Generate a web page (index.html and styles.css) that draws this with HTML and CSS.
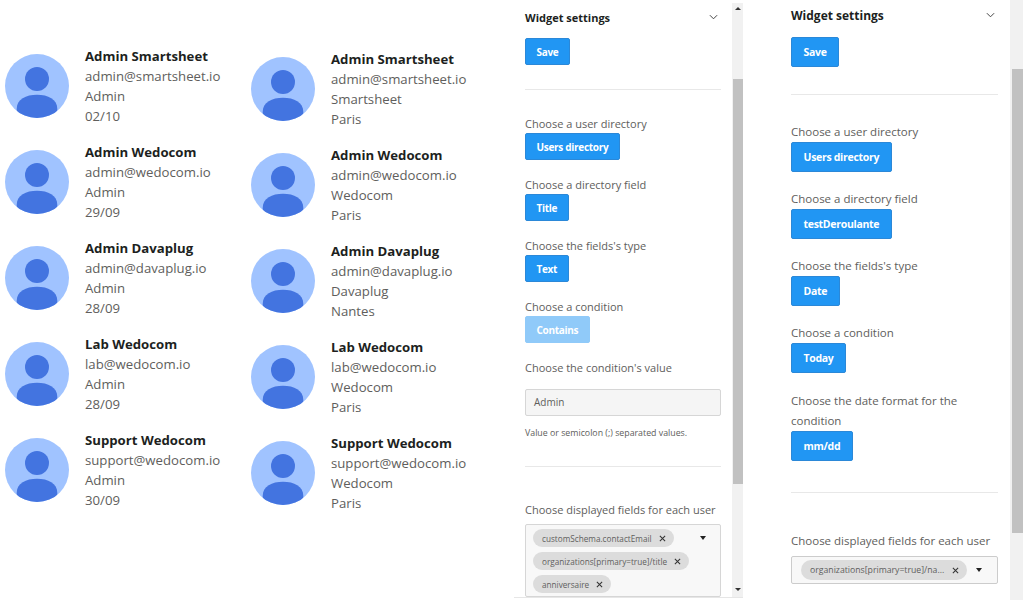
FILE: index.html
```html
<!DOCTYPE html>
<html lang="en">
<head>
<meta charset="utf-8">
<title>Widgets</title>
<link rel="stylesheet" href="styles.css">
</head>
<body>
<svg class="defs" width="0" height="0"><defs>
<symbol id="avatar" viewBox="0 0 64 64">
<clipPath id="disc"><circle cx="32" cy="32" r="32"/></clipPath>
<circle cx="32" cy="32" r="32" fill="#a0c3ff"/>
<g clip-path="url(#disc)" fill="#4374e0"><circle cx="32" cy="25" r="12"/><path d="M11.7 64V55C11.7 45 21 40.7 32 40.7S52.3 45 52.3 55V64Z"/></g>
</symbol>
<symbol id="x" viewBox="0 0 8 8"><path d="M1 1l6 6M7 1L1 7" stroke="#333" stroke-width="1.2" fill="none"/></symbol>
</defs></svg>
<main class="page">
<section class="list list-a">
<article class="user"><svg class="avatar"><use href="#avatar"/></svg><div><h3>Admin Smartsheet</h3><p>admin@smartsheet.io</p><p>Admin</p><p>02/10</p></div></article>
<article class="user"><svg class="avatar"><use href="#avatar"/></svg><div><h3>Admin Wedocom</h3><p>admin@wedocom.io</p><p>Admin</p><p>29/09</p></div></article>
<article class="user"><svg class="avatar"><use href="#avatar"/></svg><div><h3>Admin Davaplug</h3><p>admin@davaplug.io</p><p>Admin</p><p>28/09</p></div></article>
<article class="user"><svg class="avatar"><use href="#avatar"/></svg><div><h3>Lab Wedocom</h3><p>lab@wedocom.io</p><p>Admin</p><p>28/09</p></div></article>
<article class="user"><svg class="avatar"><use href="#avatar"/></svg><div><h3>Support Wedocom</h3><p>support@wedocom.io</p><p>Admin</p><p>30/09</p></div></article>
</section>
<section class="list list-b">
<article class="user"><svg class="avatar"><use href="#avatar"/></svg><div><h3>Admin Smartsheet</h3><p>admin@smartsheet.io</p><p>Smartsheet</p><p>Paris</p></div></article>
<article class="user"><svg class="avatar"><use href="#avatar"/></svg><div><h3>Admin Wedocom</h3><p>admin@wedocom.io</p><p>Wedocom</p><p>Paris</p></div></article>
<article class="user"><svg class="avatar"><use href="#avatar"/></svg><div><h3>Admin Davaplug</h3><p>admin@davaplug.io</p><p>Davaplug</p><p>Nantes</p></div></article>
<article class="user"><svg class="avatar"><use href="#avatar"/></svg><div><h3>Lab Wedocom</h3><p>lab@wedocom.io</p><p>Wedocom</p><p>Paris</p></div></article>
<article class="user"><svg class="avatar"><use href="#avatar"/></svg><div><h3>Support Wedocom</h3><p>support@wedocom.io</p><p>Wedocom</p><p>Paris</p></div></article>
</section>

<aside class="panel panel-a">
<div class="panel-body">
<header class="head"><h2>Widget settings</h2><svg class="chev" viewBox="0 0 10 6"><path d="M1 1l4 4 4-4" fill="none" stroke="#444" stroke-width="1.1"/></svg></header>
<button class="btn btn-save">Save</button>
<hr class="rule rule-1">
<div class="field"><label>Choose a user directory</label><button class="btn">Users directory</button></div>
<div class="field"><label>Choose a directory field</label><button class="btn">Title</button></div>
<div class="field"><label>Choose the fields's type</label><button class="btn">Text</button></div>
<div class="field"><label>Choose a condition</label><button class="btn btn-off">Contains</button></div>
<div class="field field-input"><label>Choose the condition's value</label><div class="input">Admin</div><small>Value or semicolon (;) separated values.</small></div>
<hr class="rule rule-2">
<div class="field field-multi"><label>Choose displayed fields for each user</label>
<div class="multi"><div class="chips"><span class="chip">customSchema.contactEmail<svg class="x"><use href="#x"/></svg></span><span class="chip">organizations[primary=true]/title<svg class="x"><use href="#x"/></svg></span><span class="chip">anniversaire<svg class="x"><use href="#x"/></svg></span></div><i class="caret"></i></div></div>
</div>
<div class="scrollbar"><span class="arrow up"></span><span class="thumb"></span><span class="arrow down"></span></div>
</aside>

<aside class="panel panel-b">
<div class="panel-body">
<header class="head"><h2>Widget settings</h2><svg class="chev" viewBox="0 0 10 6"><path d="M1 1l4 4 4-4" fill="none" stroke="#444" stroke-width="1.1"/></svg></header>
<button class="btn btn-save">Save</button>
<hr class="rule rule-1">
<div class="field"><label>Choose a user directory</label><button class="btn">Users directory</button></div>
<div class="field"><label>Choose a directory field</label><button class="btn">testDeroulante</button></div>
<div class="field"><label>Choose the fields's type</label><button class="btn">Date</button></div>
<div class="field"><label>Choose a condition</label><button class="btn">Today</button></div>
<div class="field field-last"><label>Choose the date format for the condition</label><button class="btn">mm/dd</button></div>
<hr class="rule rule-2">
<div class="field field-multi"><label>Choose displayed fields for each user</label>
<div class="multi"><div class="chips"><span class="chip">organizations[primary=true]/na...<svg class="x"><use href="#x"/></svg></span></div><i class="caret"></i></div></div>
</div>
<div class="scrollbar"><span class="thumb"></span></div>
</aside>
</main>
</body>
</html>
```
FILE: styles.css
```css
* { box-sizing: border-box; }
html, body { margin: 0; height: 100%; background: #fff; overflow: hidden; }
body { font-family: "Open Sans", "Noto Sans", sans-serif; color: #605e5c; }
.defs { position: absolute; }
.page { display: flex; align-items: flex-start; height: 611px; }

.list { flex: none; width: 246px; padding-left: 5px; }
.list-a { padding-top: 38px; }
.list-b { padding-top: 41px; width: 268px; }
.user { display: flex; align-items: center; gap: 16px; height: 96px; }
.avatar { width: 64px; height: 64px; flex: none; }
.user h3 { margin: 0; font-size: 13.2px; line-height: 20px; font-weight: 700; color: #201f1e; }
.user p { margin: 0; font-size: 13.2px; line-height: 20px; font-weight: 400; }

.panel { flex: none; display: flex; }
.panel h2 { margin: 0; font-size: 11px; font-weight: 700; color: #201f1e; }
.head { display: flex; justify-content: space-between; align-items: center; }
.chev { width: 9px; height: 6px; margin-right: 3px; }
label { display: block; font-size: 11px; color: #605e5c; }
.btn { display: block; border: 1px solid #2b88d8; border-radius: 2px; background: #2196f3; color: #fff; font: 700 10px "Open Sans", sans-serif; letter-spacing: -0.3px; padding: 0 11px 0 10.5px; }
.btn-off { background: #90caf9; border-color: #90caf9; }
.rule { border: 0; border-top: 1px solid #e8e8e8; margin: 0; }
.panel-a { width: 229px; height: 595px; margin-top: 3px; border-bottom: 1px solid #e6e6e6; }
.panel-a .panel-body { width: 218px; padding: 0 11px 0 11px; }
.panel-a .head { height: 28px; }
.panel-a .btn { height: 27px; }
.panel-a .btn-save { margin-top: 7px; }
.panel-a .rule-1 { margin-top: 24px; }
.panel-a .field { margin-top: 16px; }
.panel-a .rule-1 + .field { margin-top: 25px; }
.panel-a .field label { line-height: 18px; }
.panel-a .rule-2 { margin-top: 26px; }
.panel-a .field.field-multi { margin-top: 34px; }
.input { margin-top: 12px; height: 27px; background: #f5f5f5; border: 1px solid #d6d6d6; border-radius: 2px; padding: 0 8px; font-size: 10px; line-height: 25px; }
small { display: block; margin-top: 11px; font-size: 8.8px; line-height: 13px; }

.scrollbar { display: flex; flex-direction: column; background: #f1f1f1; }
.thumb { background: #c1c1c1; }
.panel-a .scrollbar { width: 11px; height: 594px; }
.panel-a .thumb { height: 405px; margin-top: 69px; margin-left: 1px; }
.arrow { display: block; height: 0; width: 0; margin: 0 auto; border: 3px solid transparent; }
.up { border-bottom-color: #333; margin-top: 4px; border-top-width: 0; }
.down { border-top-color: #333; margin-top: 104px; border-bottom-width: 0; }

.panel-b { width: 252px; height: 600px; margin-left: 28px; }
.panel-b .panel-body { width: 239px; padding: 0 12px 0 20px; }
.panel-b h2 { font-size: 12px; }
.panel-b .head { height: 30px; }
.panel-b .btn { height: 30px; font-size: 10.5px; padding: 0 11.5px; }
.panel-b .btn-save { margin-top: 7px; }
.panel-b .rule-1 { margin-top: 27px; }
.panel-b label { font-size: 11.5px; line-height: 20px; }
.panel-b .field { margin-top: 17px; }
.panel-b .rule-1 + .field { margin-top: 27px; }
.panel-b .field-last { margin-top: 18px; }
.panel-b .rule-2 { margin-top: 31px; }
.panel-b .field.field-multi { margin-top: 38px; }
.panel-b .scrollbar { width: 13px; height: 600px; }
.panel-b .thumb { height: 464px; margin-top: 69px; margin-left: 2px; }

.multi { display: flex; align-items: flex-start; justify-content: space-between; background: #f8f8f8; border: 1px solid #d6d6d6; border-radius: 2px; padding: 4px 7px 3px; }
.chips { display: flex; flex-direction: column; align-items: flex-start; gap: 5px; }
.chip { display: flex; align-items: center; gap: 7px; background: #dcdcdc; border-radius: 10px; height: 18px; padding: 0 8px 0 9px; font-size: 8.2px; white-space: nowrap; }
.x { width: 7px; height: 7px; }
.caret { width: 0; height: 0; border: 3.5px solid transparent; border-top: 4px solid #222; border-bottom: 0; margin: 7px 7px 0 0; }
.field-multi .multi { margin-top: 5px; }
.panel-b .field-multi .multi { margin-top: 5px; padding: 3px 9px; border-color: #ccc; }
.panel-b .chip { font-size: 8.7px; height: 20px; gap: 8px; }
.panel-b .caret { margin: 8px 6px 0 0; }
```
